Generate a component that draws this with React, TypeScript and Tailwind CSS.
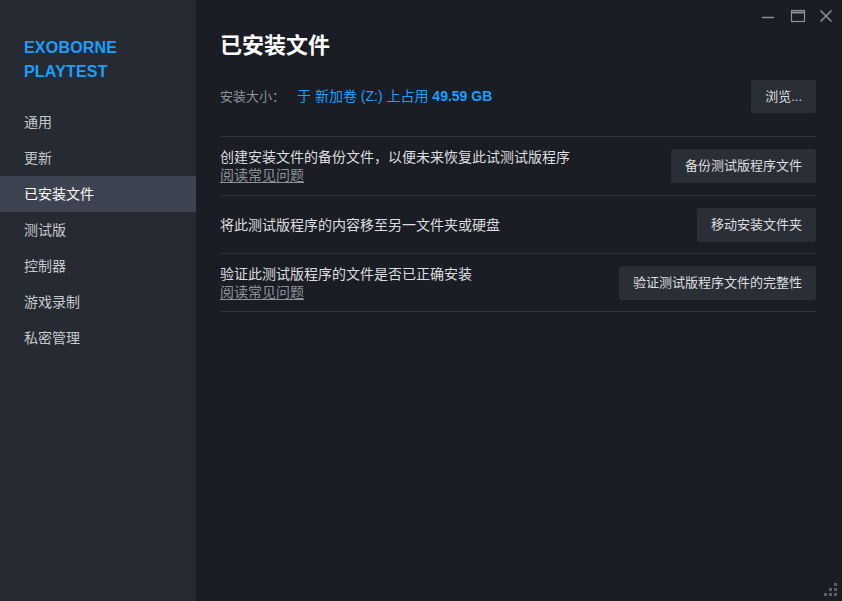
import React from "react";

const navItems = ["通用", "更新", "已安装文件", "测试版", "控制器", "游戏录制", "私密管理"];

const font = { fontFamily: '"Liberation Sans", Arial, "Noto Sans CJK SC", sans-serif' };

function Row({ text, link, button, tall }: { text: string; link?: boolean; button: string; tall?: boolean }) {
  return (
    <div className={"flex items-center justify-between border-t border-[#2c313a] " + (tall ? "min-h-[59px]" : "min-h-[58px]")}>
      <div className="flex flex-col">
        <div className="text-[14px] leading-[18px] text-[#dcdedf]">{text}</div>
        {link && <div className="text-[14px] leading-[18px] text-[#8b929a] underline underline-offset-2">阅读常见问题</div>}
      </div>
      <button className="h-[34px] px-[14px] bg-[#2a2e36] text-[13px] text-[#dcdedf] rounded-[2px] shrink-0">{button}</button>
    </div>
  );
}

export default function App() {
  return (
    <div className="w-[842px] h-[601px] flex bg-[#1a1d24] overflow-hidden relative" style={font}>
      <div className="w-[196px] h-full bg-[#262a32] flex flex-col shrink-0">
        <div className="pt-[36px] px-[24px] text-[16px] leading-[24px] font-bold text-[#1a9fff] tracking-[0.2px]">
          <div>EXOBORNE</div>
          <div>PLAYTEST</div>
        </div>
        <div className="mt-[20px] flex flex-col">
          {navItems.map((n) => (
            <div
              key={n}
              className={
                "h-[36px] flex items-center px-[24px] text-[14px] " +
                (n === "已安装文件" ? "bg-[#3d4350] text-white" : "text-[#c5c8cd]")
              }
            >
              {n}
            </div>
          ))}
        </div>
      </div>
      <div className="flex-1 h-full pl-[24px] pr-[26px] pt-[32px] relative">
        <div className="text-[22px] leading-[28px] font-bold text-white">已安装文件</div>
        <div className="mt-[20px] flex items-center justify-between pb-[23px]">
          <div className="flex items-center">
            <span className="text-[13px] text-[#8b929a]">安装大小：</span>
            <span className="ml-[12px] text-[14px] text-[#1a9fff]">
              于 新加卷 (Z:) 上占用 <span className="font-bold">49.59 GB</span>
            </span>
          </div>
          <button className="h-[33px] px-[14px] bg-[#2a2e36] text-[13px] text-[#dcdedf] rounded-[2px]">浏览...</button>
        </div>
        <Row text="创建安装文件的备份文件，以便未来恢复此试测试版程序" link button="备份测试版程序文件" tall />
        <Row text="将此测试版程序的内容移至另一文件夹或硬盘" button="移动安装文件夹" />
        <Row text="验证此测试版程序的文件是否已正确安装" link button="验证测试版程序文件的完整性" />
        <div className="border-t border-[#2c313a]" />
      </div>
      <div className="absolute top-0 right-0 flex items-center h-[32px] pr-[8px] gap-[10px] text-[#8b929a]">
        <svg width="16" height="16" viewBox="0 0 16 16"><path d="M2 9.5h12" stroke="currentColor" strokeWidth="1.5" /></svg>
        <svg width="16" height="16" viewBox="0 0 16 16" className="ml-[4px]"><rect x="1.5" y="2.5" width="13" height="11" fill="none" stroke="currentColor" strokeWidth="1.2" /><path d="M1.5 4.5h13" stroke="currentColor" strokeWidth="2" /></svg>
        <svg width="16" height="16" viewBox="0 0 16 16" className="ml-[2px]"><path d="M2.5 2.5l11 11M13.5 2.5l-11 11" stroke="currentColor" strokeWidth="1.5" /></svg>
      </div>
      <svg className="absolute right-[4px] bottom-[4px]" width="14" height="14" viewBox="0 0 14 14" fill="#5a606a">
        <rect x="10" y="0" width="3" height="3" />
        <rect x="5" y="5" width="3" height="3" />
        <rect x="10" y="5" width="3" height="3" />
        <rect x="0" y="10" width="3" height="3" />
        <rect x="5" y="10" width="3" height="3" />
        <rect x="10" y="10" width="3" height="3" />
      </svg>
    </div>
  );
}
